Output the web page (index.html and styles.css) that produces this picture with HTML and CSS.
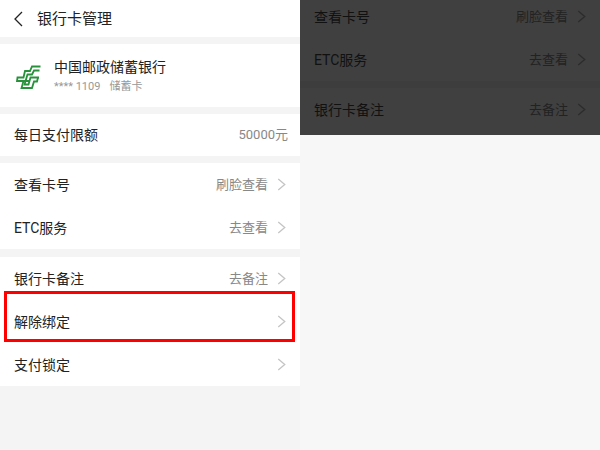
FILE: index.html
```html
<!DOCTYPE html>
<html lang="zh-CN">
<head>
  <meta charset="UTF-8">
  <meta name="viewport" content="width=device-width, initial-scale=1">
  <title>银行卡管理</title>
  <link rel="stylesheet" href="styles.css">
</head>
<body>
  <svg class="sprite" aria-hidden="true">
    <symbol id="arrow" viewBox="0 0 8 12">
      <path d="M1 1 L7 6 L1 11" fill="none" stroke="currentColor" stroke-width="1.2"/>
    </symbol>
  </svg>

  <div class="screens">
    <!-- Card management -->
    <main class="screen">
      <header class="header">
        <button class="back" type="button" aria-label="返回">
          <svg width="9" height="16" viewBox="0 0 9 16">
            <path d="M8 1 L1 8 L8 15" fill="none" stroke="currentColor" stroke-width="1.3"/>
          </svg>
        </button>
        <h1 class="title">银行卡管理</h1>
      </header>

      <section class="group card">
        <svg class="logo" width="28" height="28" viewBox="0 0 28 28" aria-hidden="true">
          <g fill="none" stroke="#28913c" stroke-width="1.8">
            <path d="M25.500 3.500 H17 L15 8 H10 L8.500 14.500 H2.500 L2 18 H14"/>
            <path d="M24.500 7.500 H19 L17 11.500 H12.500 L9.500 21.500 H13.500 L15.500 14.500 H24"/>
            <path d="M23 14.500 L22 18.500 H19 L17 25 H6.500 L8.500 18"/>
          </g>
        </svg>
        <div>
          <h2 class="bank">中国邮政储蓄银行</h2>
          <p class="number"><span>**** 1109</span><span>储蓄卡</span></p>
        </div>
      </section>

      <section class="group">
        <div class="row limit"><span>每日支付限额</span><span class="value">50000元</span></div>
      </section>

      <nav class="group">
        <a class="row" href="#"><span>查看卡号</span><span class="value">刷脸查看</span><svg class="arrow"><use href="#arrow"/></svg></a>
        <a class="row" href="#"><span>ETC服务</span><span class="value">去查看</span><svg class="arrow"><use href="#arrow"/></svg></a>
      </nav>

      <nav class="group last">
        <a class="row" href="#"><span>银行卡备注</span><span class="value">去备注</span><svg class="arrow"><use href="#arrow"/></svg></a>
        <a class="row marked" href="#"><span>解除绑定</span><svg class="arrow"><use href="#arrow"/></svg></a>
        <a class="row" href="#"><span>支付锁定</span><svg class="arrow"><use href="#arrow"/></svg></a>
      </nav>
    </main>

    <!-- Dimmed list with an empty sheet below -->
    <section class="screen sheet">
      <div class="dimmed">
        <nav class="group">
          <a class="row" href="#"><span>查看卡号</span><span class="value">刷脸查看</span><svg class="arrow"><use href="#arrow"/></svg></a>
          <a class="row" href="#"><span>ETC服务</span><span class="value">去查看</span><svg class="arrow"><use href="#arrow"/></svg></a>
        </nav>
        <nav class="group">
          <a class="row" href="#"><span>银行卡备注</span><span class="value">去备注</span><svg class="arrow"><use href="#arrow"/></svg></a>
        </nav>
      </div>
    </section>
  </div>
</body>
</html>
```
FILE: styles.css
```css
* {
  box-sizing: border-box;
}

body {
  margin: 0;
  font-family: Roboto, "Noto Sans CJK SC", sans-serif;
  font-size: 14px;
  line-height: 20px;
  color: #222;
  background: #f7f7f7;
}

h1, h2, p {
  margin: 0;
  font-weight: normal;
}

.sprite {
  position: absolute;
  width: 0;
  height: 0;
}

.screens {
  display: grid;
  grid-template-columns: 1fr 1fr;
  min-height: 100vh;
}

.screen {
  background: #f4f4f4;
}

.header {
  display: flex;
  align-items: center;
  gap: 14px;
  height: 37px;
  padding: 0 14px;
  background: #fff;
}

.back {
  display: flex;
  padding: 0;
  border: 0;
  background: none;
  color: #222;
}

.title {
  font-size: 15px;
  line-height: 20px;
}

.group {
  margin-top: 7px;
  background: #fff;
}

.last {
  margin-top: 8px;
}

.card {
  display: flex;
  align-items: center;
  gap: 11px;
  height: 63px;
  padding: 3px 15px 0;
}

.bank {
  font-size: 14px;
}

.number {
  display: flex;
  gap: 9px;
  font-size: 11px;
  line-height: 20px;
  color: #999;
}

.row {
  display: flex;
  align-items: center;
  gap: 9px;
  height: 43px;
  padding: 0 14px;
  color: inherit;
  text-decoration: none;
}

.limit {
  height: 42px;
  padding-right: 12px;
}

.value {
  margin-left: auto;
  font-size: 13px;
  color: #888;
}

.arrow {
  width: 9px;
  height: 13px;
  color: #c4c4c4;
}

.row > .arrow:nth-child(2) {
  margin-left: auto;
}

/* red frame around the unbind row */
.marked {
  position: relative;
}

.marked::after {
  content: "";
  position: absolute;
  inset: -9px 5px 1px 4px;
  border: 3px solid #f00;
}

.sheet {
  background: #f7f7f7;
}

.dimmed {
  height: 135px;
  overflow: hidden;
  background: #404040;
  color: #111;
}

.dimmed .group {
  margin-top: 0;
  background: #404040;
}

.dimmed .group:first-child {
  margin-top: -5px;
  border-bottom: 7px solid #3d3d3d;
}

.dimmed .value {
  color: #222;
}

.dimmed .arrow {
  color: #2c2c2c;
}
```
